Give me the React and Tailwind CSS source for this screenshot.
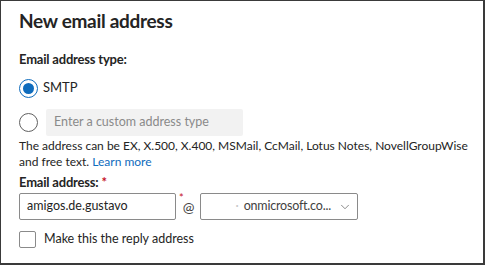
import { ChevronDown } from "lucide-react";

export default function App() {
    return (
        <div
            className="w-[485px] h-[265px] bg-white border-t border-l border-r-2 border-b-2 border-[#3a3a3a] text-[#242424] overflow-hidden"
            style={{ fontFamily: 'Lato, "Noto Sans", sans-serif' }}
        >
            <div className="pl-[18px] pt-[7px]">
                {/* Titulo */}
                <h1 className="text-[19px] font-bold leading-[26px] tracking-[-0.3px]">New email address</h1>

                <p className="mt-[16px] text-[13px] font-bold leading-[18px] tracking-[-0.2px]">Email address type:</p>

                {/* SMTP */}
                <div className="mt-[10px] flex items-center h-[20px]">
                    <span className="w-[19px] h-[19px] shrink-0 rounded-full border border-[#0f6cbd] flex items-center justify-center">
                        <span className="w-[11px] h-[11px] rounded-full bg-[#0f6cbd]" />
                    </span>
                    <span className="ml-[5px] text-[13px]">SMTP</span>
                </div>

                {/* Tipo personalizado */}
                <div className="mt-[11px] flex items-center">
                    <span className="w-[19px] h-[19px] shrink-0 rounded-full border border-[#616161]" />
                    <div className="ml-[8px] w-[197px] h-[27px] bg-[#f2f2f2] rounded-[2px] flex items-center pl-[8px] text-[12.5px] text-[#8a8a8a]">
                        Enter a custom address type
                    </div>
                </div>

                <p className="mt-[2px] text-[12px] leading-[16px] whitespace-nowrap">
                    The address can be EX, X.500, X.400, MSMail, CcMail, Lotus Notes, NovellGroupWise
                    <br />
                    and free text. <span className="text-[#0f6cbd]">Learn more</span>
                </p>

                <p className="mt-[3px] text-[13px] font-bold leading-[18px] tracking-[-0.2px]">
                    Email address: <span className="text-[#c50f1f]">*</span>
                </p>

                {/* Endereço */}
                <div className="mt-[2px] flex items-center">
                    <div className="w-[157px] h-[27px] shrink-0 border border-[#8a8a8a] rounded-[2px] flex items-center pl-[7px] text-[12.5px]">
                        amigos.de.gustavo
                    </div>
                    <span className="self-start text-[11px] leading-[11px] text-[#c50f1f] ml-[3px] mt-[-1px]">*</span>
                    <span className="ml-[-1px] text-[14px] text-[#424242]">@</span>
                    <div className="ml-[6px] w-[158px] h-[27px] shrink-0 border border-[#8a8a8a] rounded-[2px] flex items-center pl-[8px] pr-[5px] text-[12.5px] text-[#424242]">
                        <span className="whitespace-nowrap text-[#c8c8c8] ml-[26px] mr-[5px]">·</span>
                        <span className="whitespace-nowrap tracking-[-0.2px]">onmicrosoft.co...</span>
                        <ChevronDown className="ml-auto w-[14px] h-[14px] shrink-0 text-[#616161]" strokeWidth={1.25} />
                    </div>
                </div>

                {/* Resposta */}
                <div className="mt-[10px] flex items-center">
                    <span className="w-[17px] h-[17px] shrink-0 border border-[#8a8a8a] rounded-[2px]" />
                    <span className="ml-[8px] text-[12.5px]">Make this the reply address</span>
                </div>
            </div>
        </div>
    );
}
